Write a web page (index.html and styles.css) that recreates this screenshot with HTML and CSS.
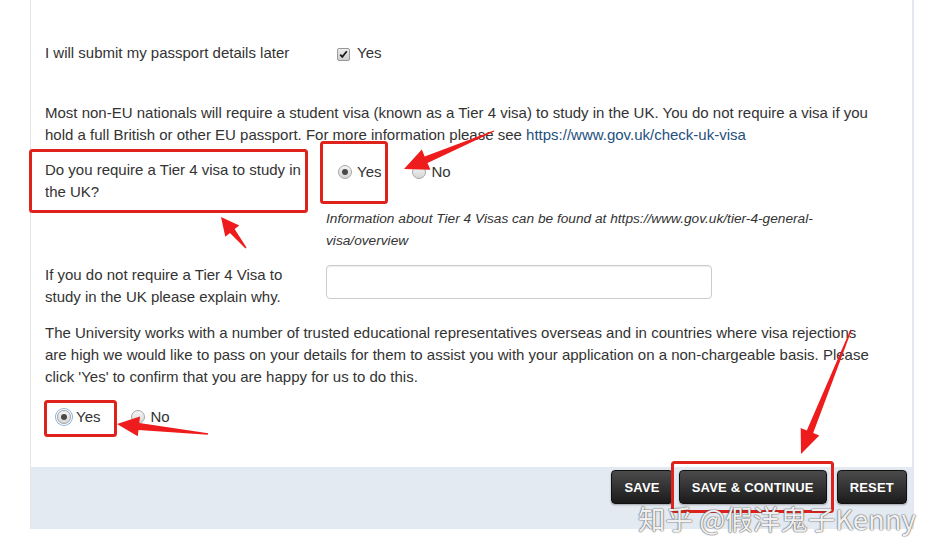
FILE: index.html
```html
<!DOCTYPE html>
<html lang="en">
<head>
  <meta charset="UTF-8">
  <meta name="viewport" content="width=device-width, initial-scale=1.0">
  <title>Application - Visa Details</title>
  <link rel="stylesheet" href="styles.css">
</head>
<body>
  <div class="panel">
    <div class="form">
      <div class="row row-first">
        <div class="label-col">I will submit my passport details later</div>
        <div class="control-col">
          <label class="choice">
            <span class="check">
              <svg width="9" height="9" viewBox="0 0 9 9"><path d="M1.2 4.6l2.1 2.3 4.5-5.6" fill="none" stroke="#1a1a1a" stroke-width="1.7"/></svg>
            </span>Yes
          </label>
        </div>
      </div>

      <p class="note">Most non-EU nationals will require a student visa (known as a Tier 4 visa) to study in the UK. You do not require a visa if you hold a full British or other EU passport. For more information please see <a href="#">https://www.gov.uk/check-uk-visa</a></p>

      <div class="row row-visa">
        <div class="label-col">Do you require a Tier 4 visa to study in the UK?</div>
        <div class="control-col">
          <div class="choices">
            <label class="choice"><span class="radio on"></span>Yes</label>
            <label class="choice"><span class="radio"></span>No</label>
          </div>
          <p class="help">Information about Tier 4 Visas can be found at https://www.gov.uk/tier-4-general-visa/overview</p>
        </div>
      </div>

      <div class="row row-explain">
        <div class="label-col">If you do not require a Tier 4 Visa to study in the UK please explain why.</div>
        <div class="control-col">
          <input class="text-input" type="text">
        </div>
      </div>

      <p class="note note-reps">The University works with a number of trusted educational representatives overseas and in countries where visa rejections are high we would like to pass on your details for them to assist you with your application on a non-chargeable basis. Please click 'Yes' to confirm that you are happy for us to do this.</p>

      <div class="choices choices-reps">
        <label class="choice"><span class="radio on focus"></span>Yes</label>
        <label class="choice"><span class="radio"></span>No</label>
      </div>
    </div>

    <div class="actions">
      <button class="btn">Save</button>
      <button class="btn">Save &amp; Continue</button>
      <button class="btn btn-reset">Reset</button>
    </div>
  </div>

  <!-- annotations drawn on top of the screenshot -->
  <div class="marks">
    <svg width="943" height="559" viewBox="0 0 943 559">
      <g fill="none" stroke="#e0221d" stroke-width="3">
        <rect x="30.5" y="150.5" width="276" height="61" rx="2"/>
        <rect x="321.5" y="142.5" width="65" height="60" rx="2"/>
        <rect x="45.5" y="401.5" width="70" height="34" rx="2"/>
        <rect x="672.5" y="462.5" width="160" height="49" rx="2"/>
      </g>
      <g fill="#ee1c1c">
        <polygon points="493.8,130.4 424.7,156.5 421.8,149.6 404,169 430.4,169.8 427.5,162.9 494.2,131.6"/>
        <polygon points="246.5,247.6 234.6,229.1 239.3,225.4 221,217 225.3,236.7 230,232.9 245.5,248.4"/>
        <polygon points="208.1,433.3 139.3,422.9 140,416.5 117,424 137.8,436.3 138.5,429.9 207.9,434.7"/>
        <polygon points="850.4,329.8 806.8,430.5 800.7,428.1 801,454 819.3,435.5 813.2,433.1 851.6,330.2"/>
      </g>
    </svg>
    <div class="watermark">知乎 @假洋鬼子Kenny</div>
  </div>
</body>
</html>
```

FILE: styles.css
```css
body {
  margin: 0;
  background: #fff;
  font-family: "Liberation Sans", Arial, sans-serif;
  font-size: 15px;
  line-height: 22px;
  color: #333;
}
.panel {
  margin-left: 30px;
  width: 884px;
  box-sizing: border-box;
  border-left: 1px solid #e6e6e6;
  border-right: 2px solid #e3e8ee;
  background: #fff;
}
.form {
  padding: 42px 0 0 14px;
}
p {
  margin: 0;
}
.row {
  display: flex;
}
.label-col {
  width: 281px;
  flex: none;
  padding-right: 14px;
  box-sizing: border-box;
}
.control-col {
  width: 520px;
}
.note {
  width: 830px;
  margin-top: 38px;
}
.note a {
  color: #24507e;
  text-decoration: none;
}
.row-visa {
  margin-top: 13px;
}
.row-visa .choices {
  padding-top: 2px;
}
.help {
  margin-top: 25px;
  font-size: 13.7px;
  font-style: italic;
}
.row-explain {
  margin-top: 12px;
}
.text-input {
  display: block;
  margin-top: 1px;
  width: 386px;
  height: 34px;
  box-sizing: border-box;
  border: 1px solid #ccc;
  border-radius: 4px;
  box-shadow: inset 0 1px 1px rgba(0, 0, 0, .075);
}
.note-reps {
  margin-top: 14px;
}
.choices-reps {
  margin-top: 18px;
}
.choices {
  display: flex;
  height: 22px;
}
.choice {
  display: flex;
  align-items: center;
  margin-left: 12px;
}
.choice + .choice {
  margin-left: 31px;
}
.row-first .choice {
  margin-left: 11px;
}
.row-first .check {
  margin-top: 2px;
}
.check {
  width: 13px;
  height: 13px;
  box-sizing: border-box;
  border: 1px solid #999;
  border-radius: 2px;
  background: linear-gradient(#ececec, #cfcfcf);
  display: flex;
  align-items: center;
  justify-content: center;
  margin-right: 7px;
}
.radio {
  position: relative;
  width: 14px;
  height: 14px;
  box-sizing: border-box;
  border: 1px solid #a6a6a6;
  border-radius: 50%;
  background: linear-gradient(#f5f5f5, #d6d6d6);
  margin-right: 5px;
}
.radio.on::after {
  content: "";
  position: absolute;
  left: 3px;
  top: 3px;
  width: 6px;
  height: 6px;
  border-radius: 50%;
  background: #4a4a4a;
}
.radio.focus {
  box-shadow: 0 0 0 1px #fff, 0 0 0 2px #8fb2d8;
}
.actions {
  margin-top: 39px;
  height: 62px;
  background: #e4eaf1;
  display: flex;
  justify-content: flex-end;
  align-items: flex-start;
  padding: 3px 5px 0 0;
  box-sizing: border-box;
}
.btn {
  height: 34px;
  padding: 0 12px;
  font-family: "Liberation Sans", Arial, sans-serif;
  font-size: 13px;
  font-weight: bold;
  letter-spacing: .2px;
  text-transform: uppercase;
  color: #fff;
  background: linear-gradient(#4b4b4b, #1b1b1b);
  border: 1px solid #111;
  border-radius: 4px;
  box-shadow: 0 1px 2px rgba(0, 0, 0, .3);
  cursor: pointer;
}
.btn + .btn {
  margin-left: 6px;
}
.btn-reset {
  margin-left: 10px !important;
}
.marks {
  position: absolute;
  left: 0;
  top: 0;
  width: 943px;
  height: 559px;
  pointer-events: none;
}
.marks svg {
  display: block;
}
.watermark {
  position: absolute;
  left: 638px;
  top: 499px;
  font-family: "Noto Sans CJK SC", "Liberation Sans", sans-serif;
  font-size: 27.5px;
  line-height: 38px;
  white-space: nowrap;
  color: rgba(255, 255, 255, .92);
  text-shadow: 0 0 1px #666, 0 0 1px #666, 0 0 2px rgba(0, 0, 0, .4);
}
```
